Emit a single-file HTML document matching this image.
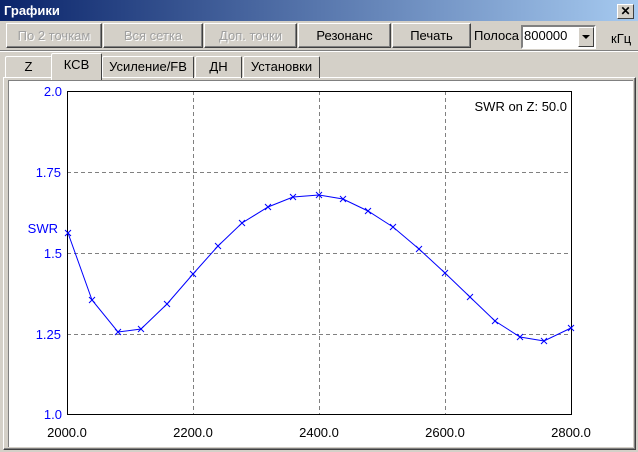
<!DOCTYPE html>
<html><head><meta charset="utf-8"><style>
*{margin:0;padding:0;box-sizing:border-box}
body{width:638px;height:452px;background:#d4d0c8;font-family:"Liberation Sans",Arial,sans-serif;font-size:13px;position:relative;overflow:hidden}
.a{position:absolute}
.title{left:0;top:0;width:638px;height:21px;background:linear-gradient(90deg,#0a246a,#a6caf0);color:#fff;font-weight:bold;font-size:13px;padding:3px 0 0 4px}
.close{left:617px;top:4px;width:17px;height:15px;background:#d4d0c8;border:1px solid;border-color:#fff #404040 #404040 #fff;color:#000;font-size:12px;font-weight:bold;text-align:center;line-height:13px}
.btn{top:23px;height:25px;border:1px solid;border-color:#fff #404040 #404040 #fff;box-shadow:inset -1px -1px #808080;text-align:center;line-height:23px}
.dis{color:#a0a0a0;text-shadow:1px 1px #fff}
.tab{top:56px;height:22px;border:1px solid;border-bottom:none;border-color:#fff #404040 #404040 #fff;border-radius:2px 2px 0 0;text-align:center;line-height:20px;font-size:13px}
</style></head><body>
<div class="a title">Графики</div>
<div class="a close">✕</div>
<div class="a btn dis" style="left:6px;width:96px">По 2 точкам</div>
<div class="a btn dis" style="left:103px;width:100px">Вся сетка</div>
<div class="a btn dis" style="left:204px;width:93px">Доп. точки</div>
<div class="a btn" style="left:298px;width:93px">Резонанс</div>
<div class="a btn" style="left:392px;width:79px">Печать</div>
<div class="a" style="left:474px;top:28px">Полоса</div>
<div class="a" style="left:521px;top:25px;width:75px;height:24px;background:#fff;border:2px solid;border-color:#808080 #fff #fff #808080;padding:1px 0 0 1px">800000</div>
<div class="a" style="left:578px;top:27px;width:16px;height:20px;background:#d4d0c8;border:1px solid;border-color:#fff #404040 #404040 #fff"><div style="margin:7px 0 0 3px;width:0;height:0;border-left:4px solid transparent;border-right:4px solid transparent;border-top:4px solid #000"></div></div>
<div class="a" style="left:611px;top:31px">кГц</div>
<div class="a" style="left:0;top:50px;width:638px;height:1px;background:#808080"></div>
<div class="a" style="left:0;top:51px;width:638px;height:1px;background:#fff"></div>
<div class="a" style="left:3px;top:77px;width:633px;height:373px;border:1px solid;border-color:#fff #404040 #404040 #fff;box-shadow:inset -1px -1px #808080"></div>
<div class="a" style="left:8px;top:80px;width:625px;height:367px;background:#fff;border-top:1px solid #808080;border-left:1px solid #808080"></div>
<div class="a tab" style="left:5px;width:47px">Z</div>
<div class="a tab" style="left:102px;width:92px">Усиление/FB</div>
<div class="a tab" style="left:195px;width:47px">ДН</div>
<div class="a tab" style="left:243px;width:77px">Установки</div>
<div class="a tab" style="left:51px;top:53px;width:51px;height:27px;background:#d4d0c8;z-index:2;line-height:22px">КСВ</div>
<svg class="a" style="left:0;top:0" width="638" height="452" font-family="Liberation Sans, Arial, sans-serif" font-size="13">
<g stroke="#808080" stroke-dasharray="4,3" stroke-width="1">
<line x1="193.5" y1="91" x2="193.5" y2="414"/><line x1="319.5" y1="91" x2="319.5" y2="414"/><line x1="445.5" y1="91" x2="445.5" y2="414"/>
<line x1="67" y1="172.5" x2="571" y2="172.5"/><line x1="67" y1="253.5" x2="571" y2="253.5"/><line x1="67" y1="334.5" x2="571" y2="334.5"/>
</g>
<rect x="67.5" y="91.5" width="504" height="323" fill="none" stroke="#000"/>
<polyline fill="none" stroke="#0000ff" points="68,233 92,300 118,332 141,329 167,304 193,274 218,246 242,223 268,207 293,197 319,195 343,199 368,211 393,227 419,249 445,273 470,297 495,321 520,337 544,341 571,328"/>
<g stroke="#0000ff" id="m">
<path d="M65,230l6,6m0,-6l-6,6M89,297l6,6m0,-6l-6,6M115,329l6,6m0,-6l-6,6M138,326l6,6m0,-6l-6,6M164,301l6,6m0,-6l-6,6M190,271l6,6m0,-6l-6,6M215,243l6,6m0,-6l-6,6M239,220l6,6m0,-6l-6,6M265,204l6,6m0,-6l-6,6M290,194l6,6m0,-6l-6,6M316,192l6,6m0,-6l-6,6M340,196l6,6m0,-6l-6,6M365,208l6,6m0,-6l-6,6M390,224l6,6m0,-6l-6,6M416,246l6,6m0,-6l-6,6M442,270l6,6m0,-6l-6,6M467,294l6,6m0,-6l-6,6M492,318l6,6m0,-6l-6,6M517,334l6,6m0,-6l-6,6M541,338l6,6m0,-6l-6,6M568,325l6,6m0,-6l-6,6"/>
</g>
<g fill="#0000ff" text-anchor="end">
<text x="62" y="96">2.0</text><text x="61" y="177">1.75</text><text x="62" y="258">1.5</text><text x="61" y="339">1.25</text><text x="62" y="419">1.0</text>
<text x="58" y="233">SWR</text>
</g>
<g fill="#000" text-anchor="middle">
<text x="67" y="437">2000.0</text><text x="193" y="437">2200.0</text><text x="319" y="437">2400.0</text><text x="445" y="437">2600.0</text><text x="571" y="437">2800.0</text>
</g>
<text x="567" y="111" text-anchor="end">SWR on Z: 50.0</text>
</svg>
</body></html>
